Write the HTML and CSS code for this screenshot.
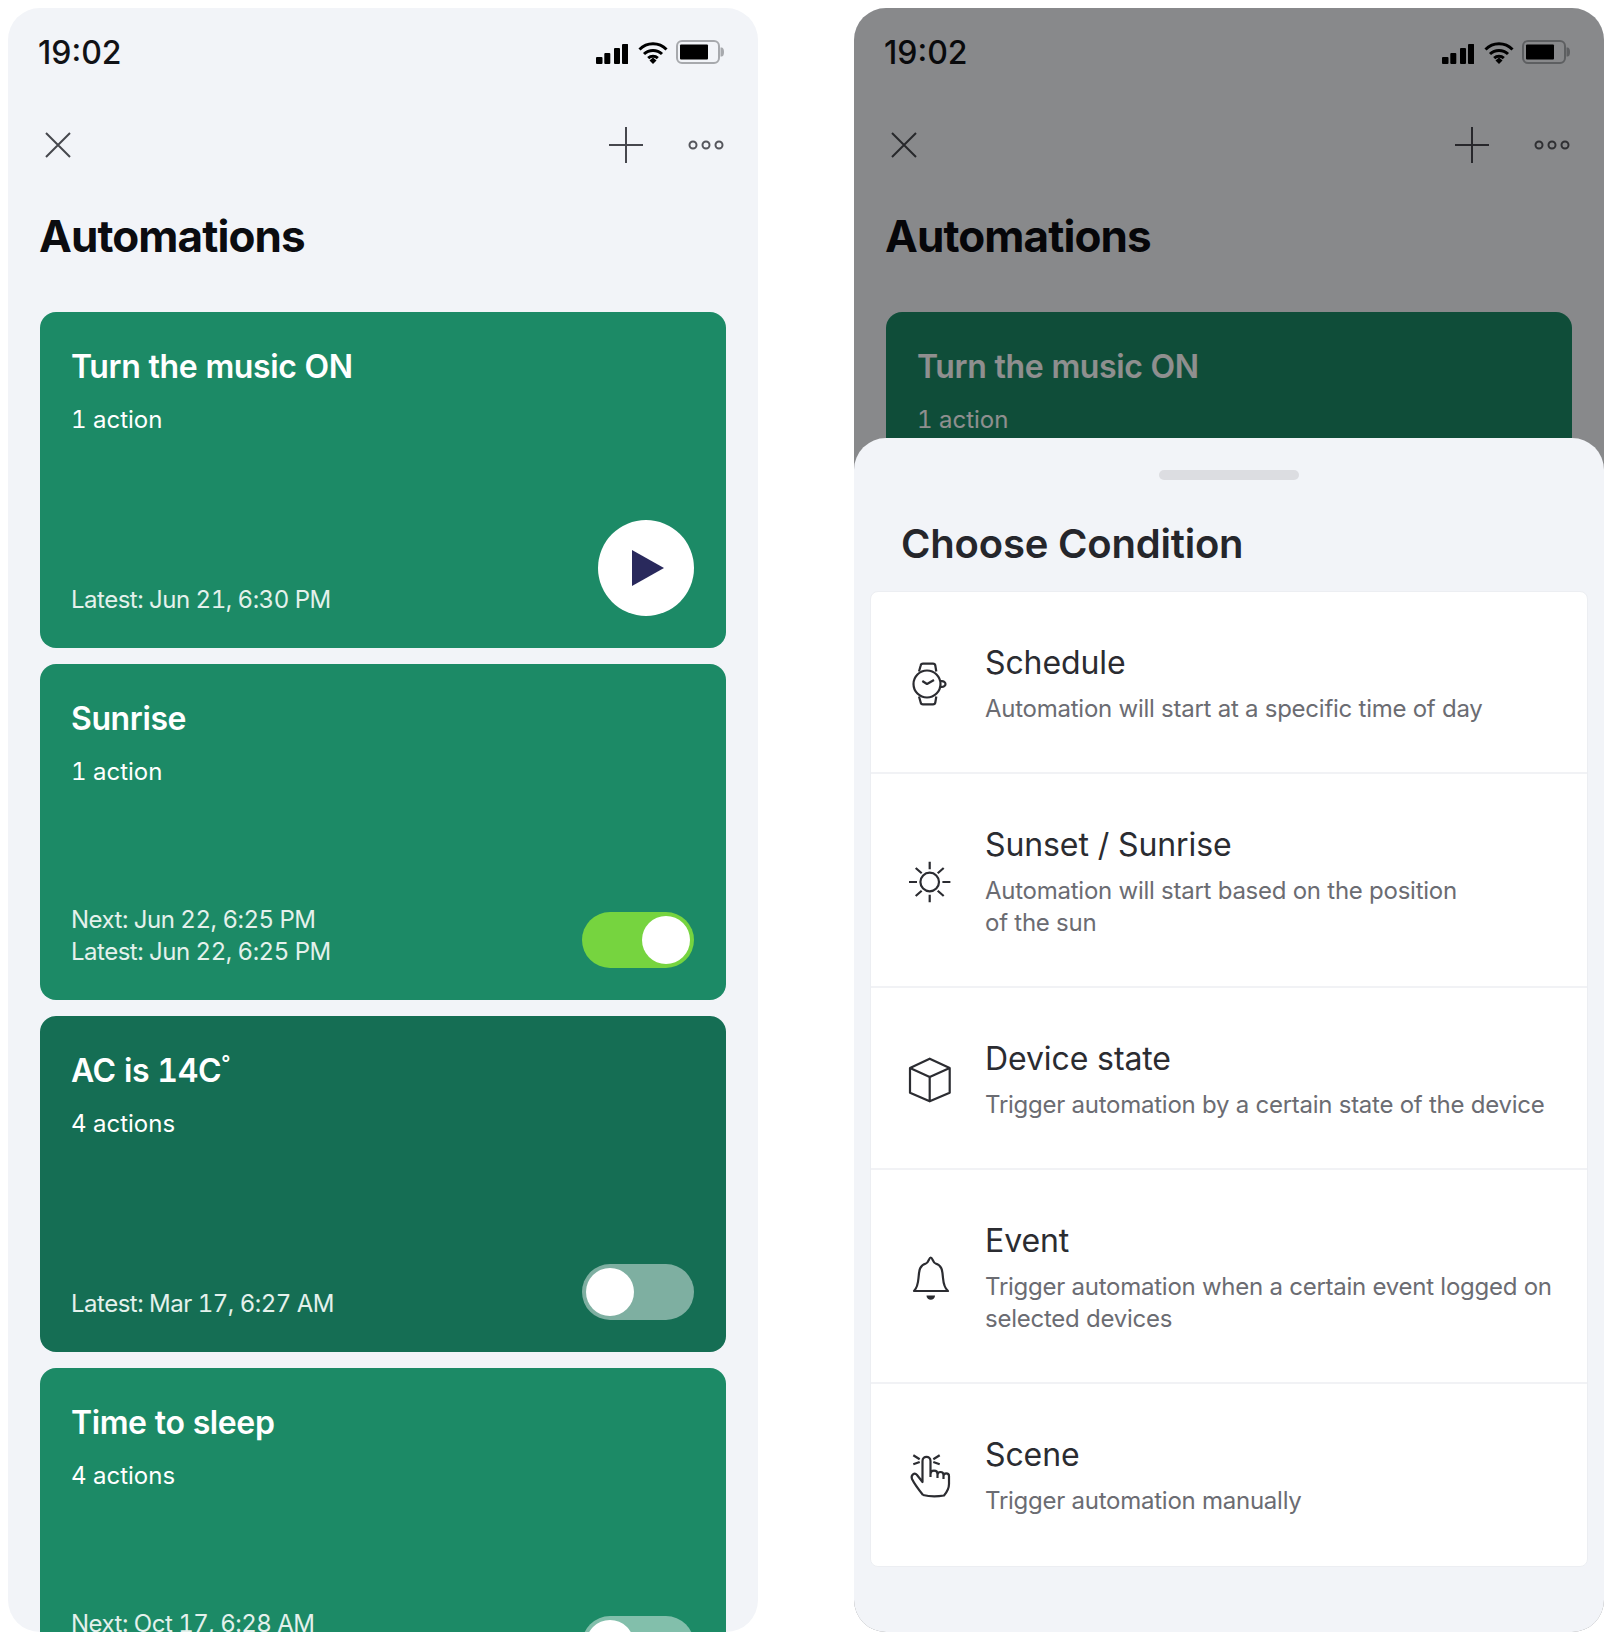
FILE: index.html
```html
<!DOCTYPE html>
<html lang="en">
<head>
    <meta charset="UTF-8">
    <meta name="viewport" content="width=device-width, initial-scale=1.0">
    <title>Automations</title>
    <link rel="stylesheet" href="styles.css">
</head>
<body>
    <svg class="defs" width="0" height="0">
        <symbol id="signal" viewBox="0 0 32 20">
            <rect x="0" y="13" width="6.5" height="7" rx="1"/>
            <rect x="8.3" y="9" width="6" height="11" rx="1"/>
            <rect x="18" y="4" width="6" height="16" rx="1"/>
            <rect x="26" y="0" width="6.3" height="20" rx="1"/>
        </symbol>
        <symbol id="wifi" viewBox="0 0 30 23">
            <path d="M1.5 8.5A19 19 0 0 1 28.5 8.5M6 13A13 13 0 0 1 24 13M10.2 17.2A7 7 0 0 1 19.8 17.2" fill="none" stroke="#000" stroke-width="3"/>
            <path d="M11.5 19.5L15 16.5L18.5 19.5L15 23Z"/>
        </symbol>
        <symbol id="battery" viewBox="0 0 48 24">
            <rect x="1" y="1" width="42" height="22" rx="5" fill="none" stroke="#a7a9ad" stroke-width="2"/>
            <rect x="4" y="4.5" width="28" height="15" rx="1"/>
            <path d="M44.5 7.5h1c1.5 0 2.5 1.5 2.5 4.5s-1 4.5-2.5 4.5h-1z" fill="#a7a9ad"/>
        </symbol>
        <symbol id="close" viewBox="0 0 26 26">
            <path d="M1 1L25 25M25 1L1 25" fill="none" stroke="#46474d" stroke-width="2"/>
        </symbol>
        <symbol id="plus" viewBox="0 0 36 36">
            <path d="M18 0V36M1 18H35" fill="none" stroke="#46474d" stroke-width="2"/>
        </symbol>
        <symbol id="dots" viewBox="0 0 36 10">
            <g fill="none" stroke="#55565c" stroke-width="2">
                <circle cx="5" cy="5" r="3.5"/>
                <circle cx="18" cy="5" r="3.5"/>
                <circle cx="31" cy="5" r="3.5"/>
            </g>
        </symbol>
    </svg>

    <div class="phone">
        <div class="status">
            <span class="time">19:02</span>
            <div class="status-icons">
                <svg class="ic-signal"><use href="#signal"/></svg>
                <svg class="ic-wifi"><use href="#wifi"/></svg>
                <svg class="ic-battery"><use href="#battery"/></svg>
            </div>
        </div>
        <div class="nav">
            <svg class="ic-close"><use href="#close"/></svg>
            <div class="nav-right">
                <svg class="ic-plus"><use href="#plus"/></svg>
                <svg class="ic-dots"><use href="#dots"/></svg>
            </div>
        </div>
        <h1 class="title">Automations</h1>
        <div class="cards">
            <div class="card">
                <h2>Turn the music ON</h2>
                <p class="actions">1 action</p>
                <p class="dates">Latest: Jun 21, 6:30 PM</p>
                <button class="play" aria-label="Run">
                    <svg width="32" height="36" viewBox="0 0 32 36"><path d="M0 0L32 18L0 36Z" fill="#29295c"/></svg>
                </button>
            </div>
            <div class="card">
                <h2>Sunrise</h2>
                <p class="actions">1 action</p>
                <p class="dates">Next: Jun 22, 6:25 PM<br>Latest: Jun 22, 6:25 PM</p>
                <span class="toggle on"><i></i></span>
            </div>
            <div class="card card-off">
                <h2>AC is 14C<sup>°</sup></h2>
                <p class="actions">4 actions</p>
                <p class="dates">Latest: Mar 17, 6:27 AM</p>
                <span class="toggle"><i></i></span>
            </div>
            <div class="card">
                <h2>Time to sleep</h2>
                <p class="actions">4 actions</p>
                <p class="dates dates-two">Next: Oct 17, 6:28 AM</p>
                <span class="toggle"><i></i></span>
            </div>
        </div>
    </div>

    <div class="phone">
        <div class="status">
            <span class="time">19:02</span>
            <div class="status-icons">
                <svg class="ic-signal"><use href="#signal"/></svg>
                <svg class="ic-wifi"><use href="#wifi"/></svg>
                <svg class="ic-battery"><use href="#battery"/></svg>
            </div>
        </div>
        <div class="nav">
            <svg class="ic-close"><use href="#close"/></svg>
            <div class="nav-right">
                <svg class="ic-plus"><use href="#plus"/></svg>
                <svg class="ic-dots"><use href="#dots"/></svg>
            </div>
        </div>
        <h1 class="title">Automations</h1>
        <div class="cards">
            <div class="card">
                <h2>Turn the music ON</h2>
                <p class="actions">1 action</p>
                <p class="dates">Latest: Jun 21, 6:30 PM</p>
            </div>
        </div>

        <div class="scrim"></div>
        <div class="sheet">
            <div class="handle"></div>
            <h2 class="sheet-title">Choose Condition</h2>
            <div class="list">
                <div class="row">
                    <svg class="row-icon" viewBox="0 0 48 48">
                        <circle cx="24" cy="24" r="13.5"/>
                        <path d="M16 11.5L17.7 5.5Q18 3.7 20 3.7H30Q32 3.7 32.3 5.5L33.3 11.5M16 36.5L17.7 42.5Q18 44.3 20 44.3H30Q32 44.3 32.3 42.5L33.3 36.5M19.3 21L24 24L31 20"/>
                        <path d="M37.5 21.2C41 20.5 42.5 22.5 42.5 24C42.5 25.5 41 27.5 37.5 26.8"/>
                    </svg>
                    <div>
                        <h3>Schedule</h3>
                        <p>Automation will start at a specific time of day</p>
                    </div>
                </div>
                <div class="row">
                    <svg class="row-icon" viewBox="0 0 48 48">
                        <circle cx="26.7" cy="24" r="9.3"/>
                        <path d="M26.7 3.7V11.3M26.7 36.7V44.3M6 24H14M39.4 24H47.4M12.7 10L18.7 15.3M40.7 10L34.7 15.3M12.7 38L18.7 32.7M40.7 38L34.7 32.7"/>
                    </svg>
                    <div>
                        <h3>Sunset / Sunrise</h3>
                        <p>Automation will start based on the position<br>of the sun</p>
                    </div>
                </div>
                <div class="row">
                    <svg class="row-icon" viewBox="0 0 48 48">
                        <path d="M26.7 2.7L46.7 12V36.7L26.7 45.3L7 36.7V12ZM7 12L26.7 21L46.7 12M26.7 21V45.3"/>
                    </svg>
                    <div>
                        <h3>Device state</h3>
                        <p>Trigger automation by a certain state of the device</p>
                    </div>
                </div>
                <div class="row">
                    <svg class="row-icon" viewBox="0 0 48 48">
                        <path d="M11 37C14 34 15 30 15.5 24C16 16 17 11 23 9.5C25.5 9 26 3.5 27.7 3.5C29.5 3.5 30 9 32.5 9.5C38.5 11 39.5 16 40 24C40.5 30 41.5 34 45 37Z"/>
                        <path class="solid" d="M23.5 41.5H32A4.25 4.25 0 0 1 23.5 41.5Z"/>
                    </svg>
                    <div>
                        <h3>Event</h3>
                        <p>Trigger automation when a certain event logged on<br>selected devices</p>
                    </div>
                </div>
                <div class="row">
                    <svg class="row-icon" viewBox="0 0 48 48">
                        <path d="M20 43C16 38 12 33 9 27C7.5 23 11.5 20 14 23L19.5 30V9C19.5 3.5 27.5 3.5 27.5 9V25M27.5 22C27.5 17.5 34.5 17.5 34.5 22V26M34.5 23C34.5 19 40.5 19 40.5 23V27M40.5 24C40.5 20.5 46 20.5 46 24V32C46 37 44 40 41 43.5C35 44.5 26 44.5 20 43"/>
                        <path d="M10.3 3.3L16.7 7.3M10.3 12.3L16.7 10M36.7 3.3L30.3 7.3M36.7 12.3L30.3 10"/>
                    </svg>
                    <div>
                        <h3>Scene</h3>
                        <p>Trigger automation manually</p>
                    </div>
                </div>
            </div>
        </div>
    </div>
</body>
</html>
```

FILE: styles.css
```css
* {
    box-sizing: border-box;
}
body {
    margin: 0;
    padding: 8px;
    background: #fff;
    font-family: Inter, "Liberation Sans", sans-serif;
    display: flex;
    gap: 96px;
}
.defs {
    position: absolute;
}
.phone {
    position: relative;
    width: 750px;
    height: 1624px;
    background: #f2f4f8;
    border-radius: 32px;
    overflow: hidden;
    flex-shrink: 0;
}
.status {
    height: 88px;
    padding: 0 34px 0 30px;
    display: flex;
    justify-content: space-between;
    align-items: center;
}
.time {
    font-size: 32px;
    font-weight: 500;
    color: #111216;
}
.status-icons {
    display: flex;
    align-items: center;
}
.ic-signal {
    width: 32px;
    height: 20px;
    margin-top: 4px;
    margin-right: 10px;
}
.ic-wifi {
    width: 30px;
    height: 23px;
    margin-right: 8px;
}
.ic-battery {
    width: 48px;
    height: 24px;
}
.nav {
    height: 48px;
    margin-top: 25px;
    padding: 0 34px 0 37px;
    display: flex;
    justify-content: space-between;
    align-items: center;
}
.ic-close {
    width: 26px;
    height: 26px;
}
.nav-right {
    display: flex;
    align-items: center;
    gap: 44px;
}
.ic-plus {
    width: 36px;
    height: 36px;
}
.ic-dots {
    width: 36px;
    height: 10px;
}
.title {
    margin: 39px 0 48px;
    padding-left: 31px;
    font-size: 44px;
    line-height: 56px;
    font-weight: 700;
    letter-spacing: -0.9px;
    color: #0b0c10;
}
.cards {
    padding: 0 32px;
    display: flex;
    flex-direction: column;
    gap: 16px;
}
.card {
    position: relative;
    flex-shrink: 0;
    height: 336px;
    padding: 33px 32px 32px 31px;
    border-radius: 16px;
    background: #1c8a66;
    color: #fff;
    display: flex;
    flex-direction: column;
    font-variant-numeric: tabular-nums;
}
.card-off {
    background: #156e54;
}
.card h2 {
    margin: 0;
    font-size: 32px;
    line-height: 44px;
    font-weight: 600;
    letter-spacing: -0.4px;
}
.card sup {
    font-size: 20px;
    line-height: 0;
}
.actions {
    margin: 15px 0 0;
    font-size: 24px;
    line-height: 32px;
}
.dates {
    margin: auto 0 0;
    font-size: 24px;
    line-height: 32px;
    letter-spacing: -0.5px;
    color: #e4f1ec;
}
.dates-two {
    height: 64px;
}
.play {
    position: absolute;
    right: 32px;
    bottom: 32px;
    width: 96px;
    height: 96px;
    padding: 0 0 0 4px;
    border: none;
    border-radius: 50%;
    background: #fff;
    display: flex;
    align-items: center;
    justify-content: center;
}
.toggle {
    position: absolute;
    right: 32px;
    bottom: 32px;
    width: 112px;
    height: 56px;
    padding: 4px;
    border-radius: 28px;
    background: rgba(255, 255, 255, 0.45);
    display: flex;
}
.toggle i {
    width: 48px;
    height: 48px;
    border-radius: 50%;
    background: #fff;
}
.toggle.on {
    background: #76d43f;
    justify-content: flex-end;
}
.scrim {
    position: absolute;
    inset: 0;
    background: rgba(0, 0, 0, 0.44);
}
.sheet {
    position: absolute;
    left: 0;
    right: 0;
    top: 430px;
    bottom: 0;
    padding: 32px 16px 0;
    background: #f2f4f8;
    border-radius: 32px 32px 0 0;
}
.handle {
    width: 140px;
    height: 10px;
    margin: 0 auto 38px;
    border-radius: 5px;
    background: #dcdde1;
}
.sheet-title {
    margin: 0 0 21px;
    padding-left: 31px;
    font-size: 40px;
    line-height: 52px;
    font-weight: 600;
    letter-spacing: -0.2px;
    color: #25262b;
}
.list {
    background: #fff;
    border: 1px solid #eceef2;
    border-radius: 8px;
}
.row {
    padding: 51px 32px 47px 32px;
    border-bottom: 2px solid #f1f2f5;
    display: flex;
    align-items: center;
    gap: 34px;
}
.row:last-child {
    border-bottom: none;
    padding-bottom: 49px;
}
.row-icon {
    width: 48px;
    height: 48px;
    flex-shrink: 0;
    fill: none;
    stroke: #2b2c31;
    stroke-width: 2.2;
    stroke-linejoin: round;
}
.row-icon .solid {
    fill: #2b2c31;
    stroke: none;
}
.row h3 {
    margin: 0 0 10px;
    font-size: 32px;
    line-height: 40px;
    font-weight: 400;
    letter-spacing: -0.1px;
    color: #2b2c31;
}
.row p {
    margin: 0;
    font-size: 24px;
    line-height: 32px;
    letter-spacing: -0.25px;
    color: #6b6c72;
}
```
